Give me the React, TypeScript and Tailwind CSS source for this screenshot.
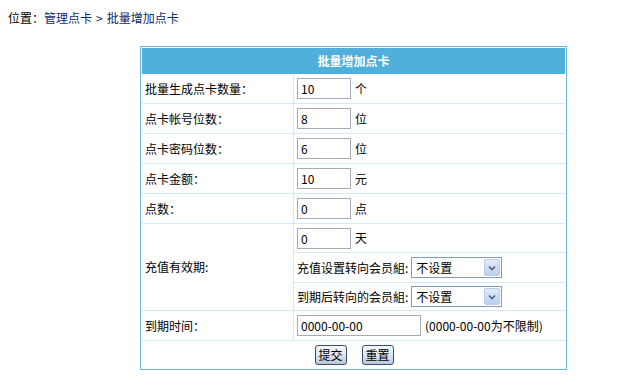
const font = { fontFamily: '"Noto Sans CJK SC", "Liberation Sans", sans-serif' };

function Field({ value, width = "w-[54px]" }: { value: string; width?: string }) {
  return (
    <div
      className={`${width} h-[21px] border border-[#a5acb2] bg-white pl-[3px] text-[12px] leading-[19px] text-black`}
    >
      {value}
    </div>
  );
}

function FakeSelect() {
  return (
    <div className="flex h-[21px] w-[91px] items-center border border-[#7f9db9] bg-white pl-[4px] pr-px">
      <span className="flex-1 text-[12px] leading-[19px]">不设置</span>
      <span className="flex h-[17px] w-[16px] items-center justify-center rounded-[2px] border border-[#b9cbe6] bg-gradient-to-b from-[#e4ecf8] to-[#b8cdee]">
        <svg width="8" height="6" viewBox="0 0 8 6">
          <path d="M1 1.5 L4 4.5 L7 1.5" fill="none" stroke="#4d6185" strokeWidth="1.6" />
        </svg>
      </span>
    </div>
  );
}

function Btn({ label }: { label: string }) {
  return (
    <button className="h-[20px] w-[32px] rounded-[3px] border border-[#3d4f6e] bg-gradient-to-b from-[#f4f7fc] via-[#dde6f3] to-[#b7c6dc] text-[12px] leading-[18px] text-black">
      {label}
    </button>
  );
}

const rows: { label: string; value: string; unit: string }[] = [
  { label: "批量生成点卡数量：", value: "10", unit: "个" },
  { label: "点卡帐号位数：", value: "8", unit: "位" },
  { label: "点卡密码位数：", value: "6", unit: "位" },
  { label: "点卡金额：", value: "10", unit: "元" },
  { label: "点数：", value: "0", unit: "点" },
];

export default function App() {
  return (
    <div className="h-[392px] w-[636px] bg-white text-[12px] text-black" style={font}>
      <div className="flex pl-[8px] pt-[10px] leading-[16px]">
        位置：
        <span className="text-[#0c2a70]">管理点卡</span>
        <span className="mx-[4px] text-[#0c2a70]">&gt;</span>
        <span className="text-[#0c2a70]">批量增加点卡</span>
      </div>

      <div className="ml-[140px] mt-[20px] w-[427px] border border-[#6fb3da] p-px">
        <div className="h-[26px] bg-[#51b0db] text-center text-[12px] font-bold leading-[26px] text-white">
          批量增加点卡
        </div>

        {rows.map((r) => (
          <div key={r.label} className="flex h-[30px] border-b border-[#d3e9f5]">
            <div className="flex w-[152px] items-center border-r border-[#d3e9f5] pl-[3px]">
              {r.label}
            </div>
            <div className="flex flex-1 items-center gap-[4px] pl-[3px]">
              <Field value={r.value} />
              <span>{r.unit}</span>
            </div>
          </div>
        ))}

        <div className="flex h-[87px] border-b border-[#d3e9f5]">
          <div className="flex w-[152px] items-center border-r border-[#d3e9f5] pl-[3px]">
            充值有效期:
          </div>
          <div className="flex flex-1 flex-col">
            <div className="flex h-[29px] items-center gap-[4px] border-b border-[#d3e9f5] pl-[3px]">
              <Field value="0" />
              <span>天</span>
            </div>
            <div className="flex h-[30px] items-center gap-[3px] border-b border-[#d3e9f5] pl-[3px]">
              <span>充值设置转向会员組:</span>
              <FakeSelect />
            </div>
            <div className="flex flex-1 items-center gap-[3px] pl-[3px]">
              <span>到期后转向的会员組:</span>
              <FakeSelect />
            </div>
          </div>
        </div>

        <div className="flex h-[30px] border-b border-[#d3e9f5]">
          <div className="flex w-[152px] items-center border-r border-[#d3e9f5] pl-[3px]">
            到期时间：
          </div>
          <div className="flex flex-1 items-center gap-[4px] pl-[3px]">
            <Field value="0000-00-00" width="w-[124px]" />
            <span>(0000-00-00为不限制)</span>
          </div>
        </div>

        <div className="flex h-[27px] items-center justify-center gap-[15px] pl-px">
          <Btn label="提交" />
          <Btn label="重置" />
        </div>
      </div>
    </div>
  );
}
